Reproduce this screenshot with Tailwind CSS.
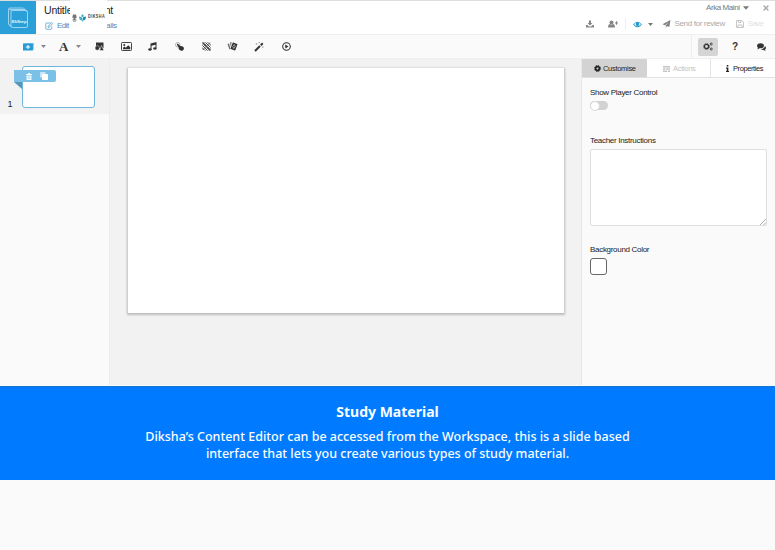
<!DOCTYPE html>
<html lang="en">
<head>
<meta charset="utf-8">
<title>Content Editor</title>
<script src="https://cdn.jsdelivr.net/npm/@tailwindcss/browser@4"></script>
</head>
<body class="w-[775px] h-[550px] overflow-hidden bg-[#fafafb] font-['Liberation_Sans',Arial,sans-serif] text-[#333]">
<div class="flex flex-col h-[386px]">
  <header class="flex h-[34px] bg-white border-t border-[#dedede] shrink-0">
    <div class="w-[36px] h-[33px] bg-[#2a9fd8] flex items-center justify-center">
      <svg class="w-[24px] h-[24px]" viewBox="0 0 24 24" fill="none" stroke="#a9d9f2" stroke-width=".9"><path d="M5 20.500 2.500 18V3.500Q2.500 2 4 2H17.500L21 5.500"/><rect x="5" y="4.500" width="16.500" height="17" rx="1.500"/><path d="M2.800 2.500 5.500 5M3 18.500l2.500 2.500M4 3.500h14.500l2 1.500"/><text x="13.200" y="17" text-anchor="middle" font-size="4.400" fill="#e8f7ff" stroke="none" font-weight="bold" font-family="Liberation Sans">EkStep</text></svg>
    </div>
    <div class="relative ml-[8px] w-[90px]">
      <div class="h-[18px] leading-[18px] text-[10.500px] tracking-[-0.2px] whitespace-nowrap flex justify-between w-[69px] text-[#222]"><span>Untitle</span><span>nt</span></div>
      <div class="flex items-center h-[13px] text-[8px] leading-[13px] text-[#4f87bd] whitespace-nowrap">
        <svg class="w-[8px] h-[8px] ml-[1px] mr-[4px] shrink-0" viewBox="0 0 16 16" fill="none" stroke="#4f9ac4" stroke-width="1.500"><path d="M11 2H3Q1.500 2 1.500 3.500V13Q1.500 14.500 3 14.500H12Q13.500 14.500 13.500 13V9"/><path d="M6 11l.5-3L13.500 1l2 2L9 10z"/></svg><span class="w-[49px] shrink-0 tracking-[-.5px]">Edit</span><span class="tracking-[-.3px]">ails</span>
      </div>
      <div class="absolute left-[25.500px] top-[-1px] w-[37px] h-[34px] bg-white flex items-center pt-[1px] pl-[2.500px]">
        <svg class="w-[5px] h-[8px] shrink-0" viewBox="0 0 10 16" fill="#777"><path d="M2 1h6v2h1v5H1V3h1zM3 8h4v3H3zM1 11h8v2H1zM2 14h6v1H2z"/></svg>
        <svg class="w-[7px] h-[8px] ml-[2px] shrink-0" viewBox="0 0 14 16"><path d="M7 0l3 4-3 3-3-3z" fill="#48b3c9"/><path d="M0 5l5 1 2 4-2 3C1 12 0 9 0 5z" fill="#4eaaba"/><path d="M14 5l-5 1-2 4 2 3c4-1 5-4 5-8z" fill="#2587a7"/><path d="M5 13l2-2 2 2-2 3z" fill="#5dbaca"/></svg>
        <span class="w-[17px] text-[4.500px] leading-none ml-[2px] tracking-[.5px] text-[#444] whitespace-nowrap font-bold scale-x-[.85] origin-left">DIKSHA</span>
      </div>
    </div>
    <div class="ml-auto w-[191px]">
      <div class="flex items-center h-[13px] text-[8px] leading-[13px] text-[#777] pl-[122px]">
        <span class="w-[34px] whitespace-nowrap tracking-[-.42px]">Arka Maini</span>
        <svg class="w-[6px] h-[4px] ml-[3px] shrink-0" viewBox="0 0 10 6"><path d="M0 0h10L5 6z" fill="#777"/></svg>
        <svg class="w-[6px] h-[6px] ml-[14px] shrink-0" viewBox="0 0 10 10" stroke="#aaa" stroke-width="2.400"><path d="M1 1l8 8M9 1L1 9"/></svg>
      </div>
      <div class="flex items-center h-[20px] text-[8px] text-[#aaa]">
        <svg class="w-[8px] h-[8px] ml-[2px] shrink-0" viewBox="0 0 16 16" fill="#858585"><path d="M6 1h4v5h3L8 11 3 6h3zM0 10h3l3 3h4l3-3h3v5H0z"/></svg>
        <svg class="w-[10px] h-[8px] ml-[14px] shrink-0" viewBox="0 0 20 16" fill="#858585"><circle cx="7" cy="5" r="4"/><path d="M0 15c0-5 2-7 4-7 2 2 4 2 6 0 2 0 4 2 4 7zM14 5h2V2.500h2V5h2v2h-2v2.500h-2V7h-2z"/></svg>
        <div class="w-px h-[12px] bg-[#eee] ml-[7px] shrink-0"></div>
        <svg class="w-[9px] h-[7px] ml-[7px] shrink-0" viewBox="0 0 18 12"><path d="M0 6Q9-5 18 6 9 17 0 6z" fill="#299bcc"/><path d="M2 6q2-3 4-3.500-1 6 3 6.500 4-.5 3-6.500 2 .5 4 3.500-7 7-14 0z" fill="#d8f0fb"/><circle cx="9" cy="5.500" r="2.800" fill="#299bcc"/></svg>
        <svg class="w-[5px] h-[3px] ml-[6px] shrink-0" viewBox="0 0 10 6"><path d="M0 0h10L5 6z" fill="#777"/></svg>
        <svg class="w-[9px] h-[8px] ml-[9px] shrink-0" viewBox="0 0 16 16" fill="#7e7e7e"><path d="M16 0L13.500 14 9 12l-2.500 3.500V11L13 3.500 5 10.500 0 8.500z"/></svg>
        <span class="ml-[3.500px] w-[49px] shrink-0 whitespace-nowrap tracking-[-.35px]">Send for review</span>
        <svg class="w-[8px] h-[8px] ml-[12px] shrink-0" viewBox="0 0 16 16" fill="none" stroke="#c6c6c6" stroke-width="2"><path d="M1 1h10.500L15 4.500V15H1z"/><path d="M4 15v-5h8v5M5 1v4h5V1"/></svg>
        <span class="ml-[4px] text-[#e2e2e2] text-[8px] tracking-[-.6px]">Save</span>
      </div>
    </div>
  </header>

  <div class="flex items-center h-[25px] bg-[#fafafa] border-y border-[#efefef] shrink-0 text-[#333]">
    <div class="flex items-center w-[36px] ml-[23px]">
      <svg class="w-[11px] h-[8px]" viewBox="0 0 20 16" preserveAspectRatio="none"><path d="M2 0h18v14" fill="#9bd0ec"/><rect y="1" width="18" height="14" fill="#269bd5"/><path d="M9 4v8M5 8h8" stroke="#fff" stroke-width="2"/></svg>
      <svg class="w-[5px] h-[3px] ml-[7px]" viewBox="0 0 10 6"><path d="M0 0h10L5 6z" fill="#888"/></svg>
    </div>
    <div class="flex items-center w-[27px]">
      <span class="font-['Liberation_Serif',serif] font-bold text-[13px] leading-none w-[9px]">A</span>
      <svg class="w-[5px] h-[3px] ml-[8px]" viewBox="0 0 10 6"><path d="M0 0h10L5 6z" fill="#888"/></svg>
    </div>
    <div class="grid grid-cols-[repeat(8,26.7px)] justify-items-center items-center">
      <svg class="w-[9px] h-[9px]" viewBox="0 0 18 18"><path d="M2 1h15v11H2z" fill="#333"/><circle cx="4.500" cy="12" r="4.500" fill="#333" stroke="#fafafa" stroke-width=".8"/><path d="M13 7l5 10H9z" fill="#333" stroke="#fafafa" stroke-width="1"/></svg>
      <svg class="w-[11px] h-[9px]" viewBox="0 0 22 18"><rect x="1" y="1" width="20" height="16" rx="1.500" fill="none" stroke="#444" stroke-width="2"/><circle cx="6.500" cy="6" r="2" fill="#333"/><path d="M4 14.500v-3l3-2.500 2.500 2.500 5-5 4 4v4z" fill="#333"/></svg>
      <svg class="w-[9px] h-[9px]" viewBox="0 0 18 18" fill="#333"><path d="M5 3l12-3v13h-2V5.500L7 7.500V16H5z"/><ellipse cx="3.800" cy="15" rx="3.300" ry="2.500"/><ellipse cx="13.800" cy="13" rx="3.300" ry="2.500"/></svg>
      <svg class="w-[9px] h-[9px]" viewBox="0 0 18 18"><circle cx="5.500" cy="5.500" r="4.500" fill="none" stroke="#999" stroke-width="1.500"/><path d="M4 4q1.500-1 2.500 0l4 4q5-1 7 3 1 4-2 6-5 2-8-3L7 10 4 6z" fill="#333"/></svg>
      <svg class="w-[9px] h-[9px]" viewBox="0 0 18 18" fill="none" stroke="#444"><path d="M1 1l16 16" stroke-width="3"/><path d="M7 1l10 10M12 1l5 5M1 7l10 10M1 12l5 5" stroke-width="2"/><path d="M1 5l4-4M1 11L11 1M1 16L16 1M7 17L17 7M12 17l5-5" stroke-width="1.300"/></svg>
      <svg class="w-[11px] h-[9px]" viewBox="0 0 22 18"><path d="M1 4l3-1 3 11-2 1zM6 1l3-1-1 11z" fill="#666"/><rect x="9" y="2" width="10" height="14" rx="1" transform="rotate(20 14 9)" fill="#333"/><path d="M14.500 5l2 4-3 4-2-4z" fill="none" stroke="#ddd" stroke-width="1.300"/></svg>
      <svg class="w-[10px] h-[10px]" viewBox="0 0 20 20"><path d="M2 18L12 8" stroke="#333" stroke-width="4"/><path d="M13.500 6.500l4-4" stroke="#333" stroke-width="4"/><path d="M3 4h4M5 2v4M9 1h3M10.500 0v3M16 10h3M17.500 8v4" stroke="#999" stroke-width="1.200"/></svg>
      <svg class="w-[9px] h-[9px]" viewBox="0 0 18 18"><circle cx="9" cy="9" r="7.600" fill="none" stroke="#333" stroke-width="2.200"/><path d="M6.500 4.800L13 9l-6.500 4.200z" fill="#333"/></svg>
    </div>
    <div class="ml-auto flex items-center h-full border-l border-[#eee] pl-[6px] w-[84px]">
      <div class="w-[20px] h-[18px] rounded-[2px] bg-[#d5d5d5] flex items-center justify-center">
        <svg class="w-[10px] h-[9px]" viewBox="0 0 20 18" fill="none" stroke="#333"><circle cx="7" cy="9" r="4.200" stroke-width="2.600"/><circle cx="7" cy="9" r="6" stroke-width="1.600" stroke-dasharray="2.400 2.300"/><circle cx="16.500" cy="4" r="2" stroke-width="1.700"/><circle cx="16.500" cy="14" r="2" stroke-width="1.700"/></svg>
      </div>
      <span class="w-[34px] text-center text-[10px] font-bold leading-none">?</span>
      <svg class="w-[9px] h-[8px] ml-[5px]" viewBox="0 0 18 16" fill="#333"><ellipse cx="7" cy="5.500" rx="7" ry="5"/><path d="M2 8l-1 5 5-3zM8 12q7 0 8-6 4 4 0 7l1 3-4-2q-4 0-5-2z"/></svg>
    </div>
  </div>

  <main class="flex flex-1 bg-[#f2f2f2] min-h-0 border-b border-[#fafafa]">
    <aside class="w-[110px] bg-[#fafafa] border-r border-[#ececec] shrink-0">
      <div class="relative h-[55px] bg-[#f2f2f2] flex pt-[7px] pl-[7px]">
        <span class="text-[9px] leading-[10px] w-[14.500px] mt-[33px] pl-[.5px] text-[#222]">1</span>
        <div class="w-[73px] h-[42px] bg-white border border-[#6fb6de] rounded-[3px]"></div>
        <div class="absolute left-[14px] top-[11px] w-[42px] h-[12px] bg-[#7bc0e6] rounded-r-[2px] flex items-center">
          <svg class="w-[6px] h-[7px] ml-[12px]" viewBox="0 0 12 14" fill="#eef9ff"><path d="M0 2h4V0h4v2h4v2H0zM1 5h10v9H1z"/><path d="M4 7v5M6 7v5M8 7v5" stroke="#7bc0e6" stroke-width=".7"/></svg>
          <svg class="w-[8px] h-[8px] ml-[8px]" viewBox="0 0 16 16"><rect width="11" height="11" rx="1" fill="#c5e7f8"/><rect x="4" y="4" width="12" height="12" rx="1" fill="#fff"/></svg>
        </div>
        <svg class="absolute left-[14px] top-[23px] w-[8px] h-[7px]" viewBox="0 0 8 7"><path d="M0 0h8v7z" fill="#5696b9"/></svg>
      </div>
    </aside>
    <section class="flex-1 pt-[9px] pl-[18px]">
      <div class="w-[436px] h-[245px] bg-white shadow-[0_1px_2px_1px_rgba(0,0,0,.22)]"></div>
    </section>
    <aside class="w-[194px] bg-[#fafafa] border-l border-[#e8e8e8] shrink-0 text-[8px] tracking-[-.3px]">
      <div class="flex h-[19px] border-b border-[#e1e1e1] bg-white text-[#222]">
        <div class="w-[65px] bg-[#d3d3d3] flex items-center pt-px pl-[12px]">
          <svg class="w-[7px] h-[7px] mr-[2px] shrink-0" viewBox="0 0 14 14" fill="none" stroke="#222"><circle cx="7" cy="7" r="3.700" stroke-width="3.200"/><circle cx="7" cy="7" r="6" stroke-width="2" stroke-dasharray="2.700 2.010"/></svg><span class="text-[7.5px] tracking-[-.3px]">Customise</span>
        </div>
        <div class="w-[64px] border-r border-[#e5e5e5] flex items-center pt-px pl-[16px] text-[#c4c4c4]">
          <svg class="w-[7px] h-[6px] mr-[3px] shrink-0" viewBox="0 0 14 12" fill="#c4c4c4"><path d="M0 0h14v3H0zM0 4.500h5v3H0zM6.500 4.500H14v3H6.500zM0 9h8v3H0zM9.500 9H14v3H9.500z"/></svg><span class="text-[7.5px] tracking-[-.3px]">Actions</span>
        </div>
        <div class="flex-1 flex items-center pt-px pl-[15px]">
          <svg class="w-[3px] h-[7px] mr-[4px] shrink-0" viewBox="0 0 6 14" fill="#222"><path d="M1.500 0h3.200v3.200H1.500zM0 5h4.700v7H6v2H0v-2h1.500V7H0z"/></svg><span class="text-[7.5px] tracking-[-.4px]">Properties</span>
        </div>
      </div>
      <div class="pl-[8px] pr-[8px] pt-[9px] text-[#222]">
        <div class="h-[10px] leading-[11px]">Show Player Control</div>
        <div class="mt-[4px] w-[18px] h-[9px] rounded-full bg-[#d2d2d2] flex items-center"><div class="size-[10px] rounded-full bg-white border border-[#d8d8d8] shrink-0"></div></div>
        <div class="mt-[26px] h-[10px] leading-[9px]">Teacher Instructions</div>
        <div class="relative mt-[3px] w-[177px] h-[77px] bg-white border border-[#dedede] rounded-[2px]">
          <svg class="absolute right-0 bottom-0 w-[6px] h-[6px]" viewBox="0 0 6 6" stroke="#888" stroke-width=".7"><path d="M0 6L6 0M3.500 6L6 3.500"/></svg>
        </div>
        <div class="mt-[18px] h-[10px] leading-[11px]">Background Color</div>
        <div class="mt-[4px] size-[17px] bg-white border border-[#666] rounded-[3px]"></div>
      </div>
    </aside>
  </main>
</div>
<section class="h-[94px] bg-[#007bff] border-t border-[#1475cf] pt-[14px] text-center text-[#fafdff] font-['Noto_Sans',sans-serif]">
  <h2 class="text-[14px] leading-[22px] font-bold">Study Material</h2>
  <p class="mt-[5px] text-[12.5px] leading-[17px] font-medium">Diksha’s Content Editor can be accessed from the Workspace, this is a slide based<br>interface that lets you create various types of study material.</p>
</section>
</body>
</html>
